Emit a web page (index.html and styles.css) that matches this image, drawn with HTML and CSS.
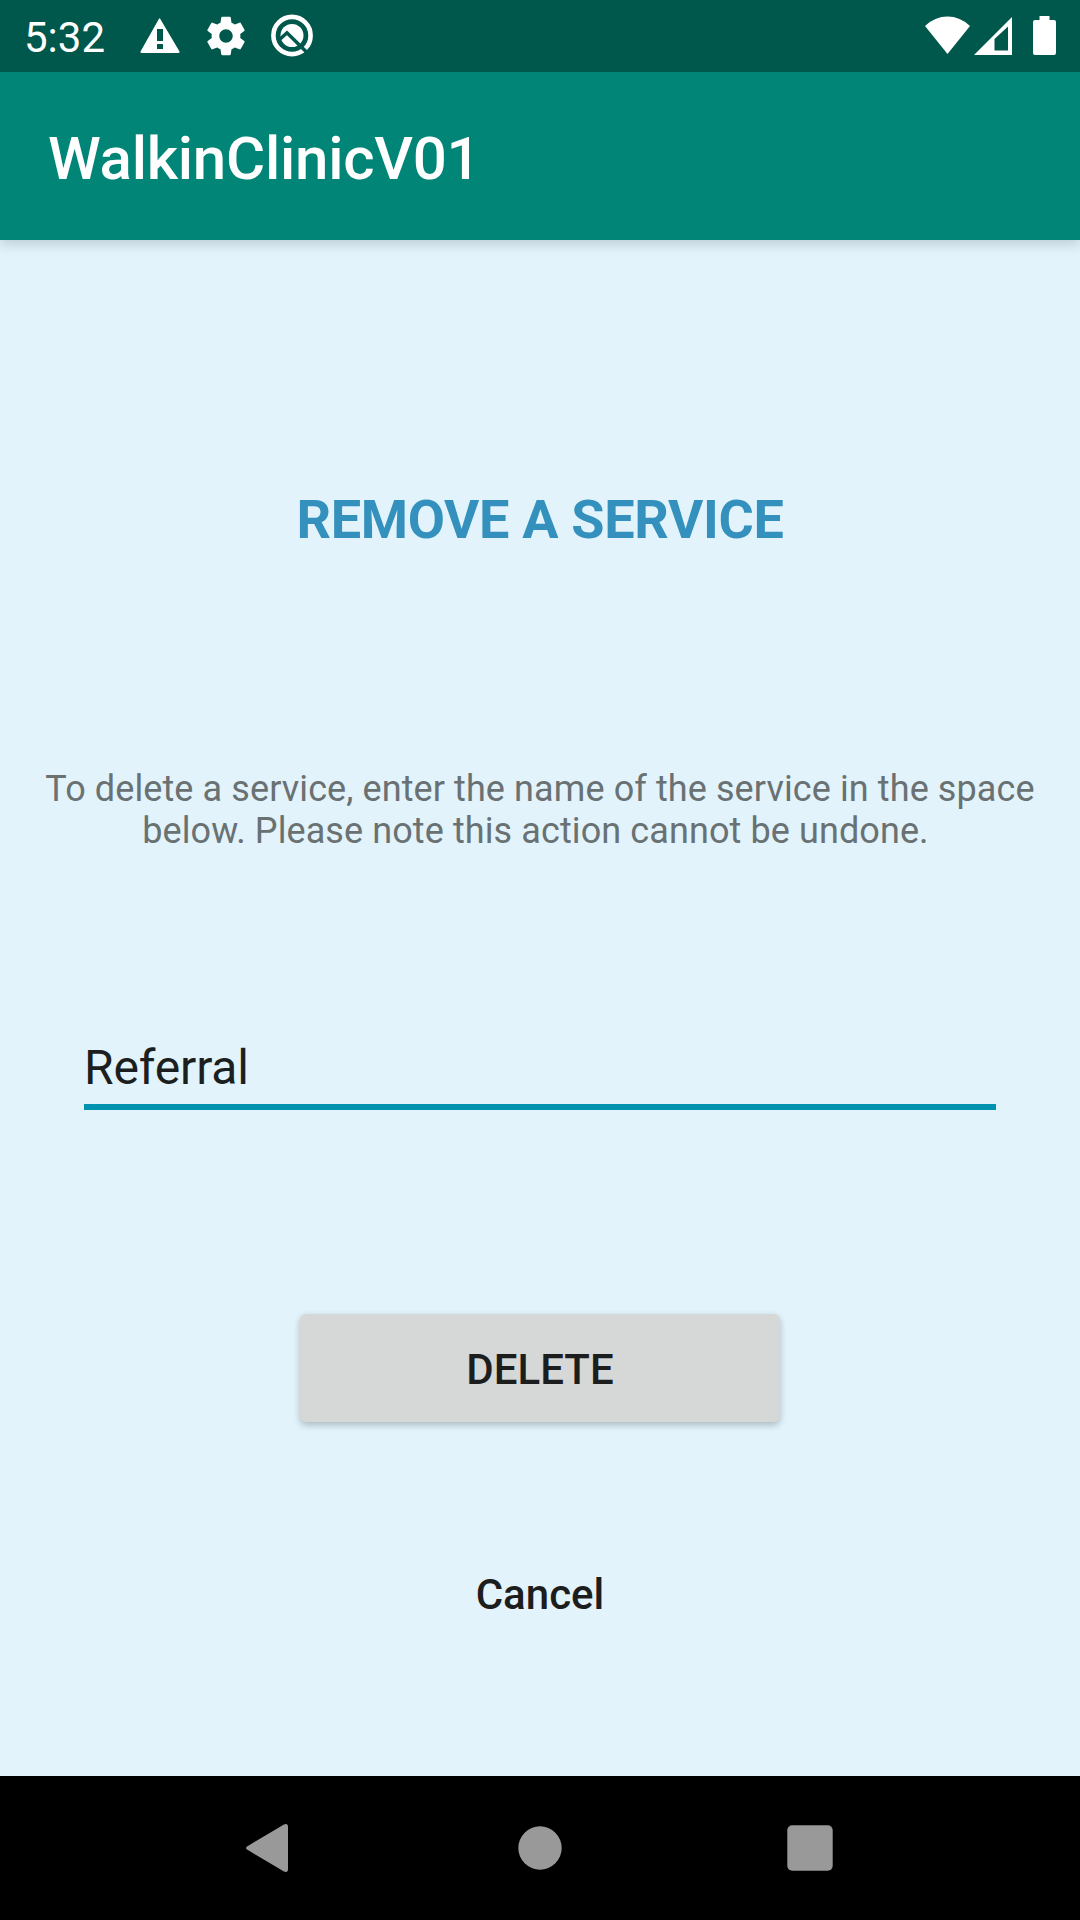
FILE: index.html
```html
<!DOCTYPE html>
<html lang="en">
<head>
<meta charset="utf-8">
<title>WalkinClinicV01</title>
<link rel="stylesheet" href="styles.css">
</head>
<body>
<header class="status-bar">
  <span class="clock">5:32</span>
  <svg class="icon-warning" viewBox="0 0 40 36"><path fill-rule="evenodd" d="M20 0.5L39.5 33.6Q40 35 38.5 35H1.5Q0 35 .5 33.6L19 .8Q19.5 0 20 .5zM17 11h6v12h-6zM17 26h6v5h-6z"/></svg>
  <svg class="icon-gear" viewBox="0 0 24 24"><path d="M19.43 12.98c.04-.32.07-.64.07-.98s-.03-.66-.07-.98l2.11-1.65c.19-.15.24-.42.12-.64l-2-3.46c-.12-.22-.39-.3-.61-.22l-2.49 1c-.52-.4-1.08-.73-1.69-.98l-.38-2.65C14.46 2.18 14.25 2 14 2h-4c-.25 0-.46.18-.49.42l-.38 2.65c-.61.25-1.17.59-1.69.98l-2.49-1c-.23-.09-.49 0-.61.22l-2 3.46c-.13.22-.07.49.12.64l2.11 1.65c-.04.32-.07.65-.07.98s.03.66.07.98l-2.11 1.65c-.19.15-.24.42-.12.64l2 3.46c.12.22.39.3.61.22l2.49-1c.52.4 1.08.73 1.69.98l.38 2.65c.03.24.24.42.49.42h4c.25 0 .46-.18.49-.42l.38-2.65c.61-.25 1.17-.59 1.69-.98l2.49 1c.23.09.49 0 .61-.22l2-3.46c.12-.22.07-.49-.12-.64l-2.11-1.65zM12 15.5c-1.93 0-3.5-1.57-3.5-3.5s1.57-3.5 3.5-3.5 3.5 1.57 3.5 3.5-1.57 3.5-3.5 3.5z"/></svg>
  <svg class="icon-q" viewBox="0 0 42 42"><circle class="q-ring" cx="21" cy="20.500" r="18.600"/><circle cx="21" cy="20.500" r="11.500"/><path class="q-cut" d="M8 25L16 17.800L36 37.500"/></svg>
  <span class="spacer"></span>
  <svg class="icon-wifi" viewBox="0 0 46 38" preserveAspectRatio="none"><path d="M0 10Q10 .5 23 .5T46 10L23 38z"/></svg>
  <svg class="icon-signal" viewBox="0 0 38 38"><path fill-rule="evenodd" d="M38 0V38H0zM34 9.5L20.5 22V33.5H34z"/></svg>
  <svg class="icon-battery" viewBox="0 0 23 39"><path d="M6.5 0h10v4H21q2 0 2 2v31q0 2-2 2H2q-2 0-2-2V6q0-2 2-2h4.500z"/></svg>
</header>
<div class="app-bar"><h1 class="app-title">WalkinClinicV01</h1></div>
<main class="content">
  <h2 class="heading">REMOVE A SERVICE</h2>
  <p class="note">To delete a service, enter the name of the service in the space<br>below. Please note this action cannot be undone.&nbsp;</p>
  <div class="field">Referral</div>
  <button class="delete">DELETE</button>
  <button class="cancel">Cancel</button>
</main>
<nav class="nav-bar">
  <svg class="nav-icon" viewBox="0 0 48 48"><path d="M1.500 22.200L38 .4Q42 -1 42 3V45Q42 49 38 47.600L1.500 25.800Q-1.500 24 1.500 22.200z"/></svg>
  <svg class="nav-icon" viewBox="0 0 48 48"><circle cx="24" cy="24" r="21.700"/></svg>
  <svg class="nav-icon" viewBox="0 0 48 48"><rect x="1.300" y="1.300" width="45.400" height="45.400" rx="5"/></svg>
</nav>
</body>
</html>
```
FILE: styles.css
```css
* { box-sizing: border-box; }
body {
  margin: 0;
  width: 1080px;
  height: 1920px;
  display: flex;
  flex-direction: column;
  background: #e2f3fb;
  font-family: Roboto, "Liberation Sans", sans-serif;
  overflow: hidden;
}
svg { display: block; flex: none; fill: #fff; overflow: visible; }
.status-bar {
  position: relative;
  z-index: 1;
  height: 72px;
  flex: none;
  display: flex;
  align-items: flex-start;
  padding: 0 24px 0 24px;
  background: #00574b;
}
.clock { width: 116px; padding-top: 14px; font-size: 42px; line-height: 48px; color: #fff; }
.icon-warning { width: 40px; height: 36px; margin-top: 18px; }
.icon-gear { width: 46px; height: 46px; margin: 13px 0 0 23px; }
.icon-q { width: 42px; height: 42px; margin: 15px 0 0 22px; }
.q-ring { fill: none; stroke: #fff; stroke-width: 4.6; }
.q-cut { fill: none; stroke: #00574b; stroke-width: 3.5; }
.spacer { flex: 1; }
.icon-wifi { width: 45px; height: 38px; margin-top: 16px; }
.icon-signal { width: 38px; height: 38px; margin: 17px 0 0 4px; }
.icon-battery { width: 23px; height: 39px; margin: 16px 0 0 21px; }
.app-bar {
  height: 168px;
  flex: none;
  display: flex;
  align-items: center;
  padding: 5px 48px 0;
  background: #008577;
  box-shadow: 0 4px 12px rgba(0, 0, 0, .16);
}
.app-title { margin: 0; font-size: 60px; font-weight: 500; line-height: 72px; letter-spacing: -.25px; color: #fff; }
.content { flex: 1; display: flex; flex-direction: column; align-items: center; }
.heading { margin: 244px 0 0; font-size: 54px; line-height: 72px; font-weight: 700; letter-spacing: -.33px; color: #3490bc; }
.note { margin: 212px 0 0; font-size: 36px; line-height: 42px; letter-spacing: .1px; text-align: center; white-space: nowrap; color: #697173; }
.field {
  width: 912px;
  height: 84px;
  margin-top: 174px;
  padding-top: 13px;
  border-bottom: 6px solid #0093b0;
  font-size: 48px;
  line-height: 58px;
  letter-spacing: -.15px;
  color: #1c1f20;
}
button { border: 0; font: 500 42px/50px Roboto, "Liberation Sans", sans-serif; color: #1c1d1d; }
.delete {
  width: 480px;
  height: 108px;
  margin-top: 204px;
  padding: 3px 0 0;
  border-radius: 6px;
  background: #d6d7d7;
  box-shadow: 0 3px 7px rgba(0, 0, 0, .24);
}
.cancel { margin-top: 148px; padding: 0; background: none; }
.nav-bar {
  height: 144px;
  flex: none;
  display: flex;
  justify-content: center;
  align-items: center;
  gap: 222px;
  background: #000;
}
.nav-icon { width: 48px; height: 48px; fill: #999; }
```
